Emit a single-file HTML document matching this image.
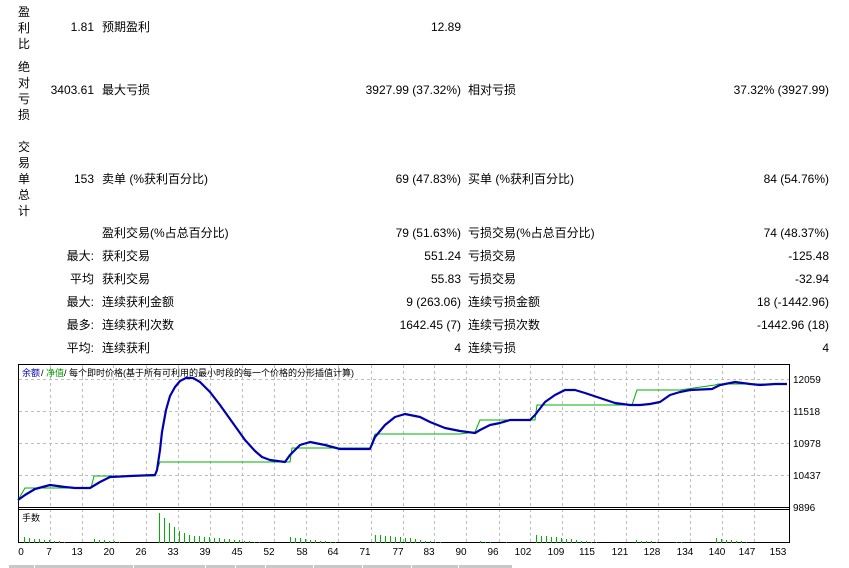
<!DOCTYPE html>
<html><head><meta charset="utf-8"><style>
html,body{margin:0;padding:0;background:#fff;width:849px;height:568px;overflow:hidden;position:relative;font-family:"Liberation Sans","Noto Sans CJK SC",sans-serif;font-size:12px;color:#000}
.t{position:absolute;line-height:16px;white-space:nowrap}
.r{text-align:right}
.v{position:absolute;left:17px;width:14px;line-height:16px;font-size:12px;text-align:center}
svg{position:absolute;left:0;top:0}
</style></head><body>
<div class="v" style="top:4px">盈<br>利<br>比</div>
<div class="v" style="top:59px">绝<br>对<br>亏<br>损</div>
<div class="v" style="top:139px">交<br>易<br>单<br>总<br>计</div>

<div class="t r" style="right:755px;top:19px">1.81</div>
<div class="t" style="left:102px;top:19px">预期盈利</div>
<div class="t r" style="right:388px;top:19px">12.89</div>

<div class="t r" style="right:755px;top:82px">3403.61</div>
<div class="t" style="left:102px;top:82px">最大亏损</div>
<div class="t r" style="right:388px;top:82px">3927.99 (37.32%)</div>
<div class="t" style="left:468px;top:82px">相对亏损</div>
<div class="t r" style="right:20px;top:82px">37.32% (3927.99)</div>

<div class="t r" style="right:755px;top:171px">153</div>
<div class="t" style="left:102px;top:171px">卖单 (%获利百分比)</div>
<div class="t r" style="right:388px;top:171px">69 (47.83%)</div>
<div class="t" style="left:468px;top:171px">买单 (%获利百分比)</div>
<div class="t r" style="right:20px;top:171px">84 (54.76%)</div>

<div class="t" style="left:102px;top:225px">盈利交易(%占总百分比)</div>
<div class="t r" style="right:388px;top:225px">79 (51.63%)</div>
<div class="t" style="left:468px;top:225px">亏损交易(%占总百分比)</div>
<div class="t r" style="right:20px;top:225px">74 (48.37%)</div>

<div class="t r" style="right:755px;top:248px">最大:</div>
<div class="t" style="left:102px;top:248px">获利交易</div>
<div class="t r" style="right:388px;top:248px">551.24</div>
<div class="t" style="left:468px;top:248px">亏损交易</div>
<div class="t r" style="right:20px;top:248px">-125.48</div>

<div class="t r" style="right:755px;top:271px">平均</div>
<div class="t" style="left:102px;top:271px">获利交易</div>
<div class="t r" style="right:388px;top:271px">55.83</div>
<div class="t" style="left:468px;top:271px">亏损交易</div>
<div class="t r" style="right:20px;top:271px">-32.94</div>

<div class="t r" style="right:755px;top:294px">最大:</div>
<div class="t" style="left:102px;top:294px">连续获利金额</div>
<div class="t r" style="right:388px;top:294px">9 (263.06)</div>
<div class="t" style="left:468px;top:294px">连续亏损金额</div>
<div class="t r" style="right:20px;top:294px">18 (-1442.96)</div>

<div class="t r" style="right:755px;top:317px">最多:</div>
<div class="t" style="left:102px;top:317px">连续获利次数</div>
<div class="t r" style="right:388px;top:317px">1642.45 (7)</div>
<div class="t" style="left:468px;top:317px">连续亏损次数</div>
<div class="t r" style="right:20px;top:317px">-1442.96 (18)</div>

<div class="t r" style="right:755px;top:340px">平均:</div>
<div class="t" style="left:102px;top:340px">连续获利</div>
<div class="t r" style="right:388px;top:340px">4</div>
<div class="t" style="left:468px;top:340px">连续亏损</div>
<div class="t r" style="right:20px;top:340px">4</div>

<svg width="849" height="568" viewBox="0 0 849 568">
<g stroke="#bdbdbd" stroke-dasharray="3,3" stroke-width="1" fill="none">
<path d="M50.5 365V543M82.5 365V543M113.5 365V543M146.5 365V543M178.5 365V543M210.5 365V543M242.5 365V543M274.5 365V543M306.5 365V543M338.5 365V543M371.5 365V543M403.5 365V543M434.5 365V543M466.5 365V543M499.5 365V543M530.5 365V543M562.5 365V543M594.5 365V543M626.5 365V543M658.5 365V543M690.5 365V543M722.5 365V543M754.5 365V543"/>
<path d="M19 379.5H789M19 411.5H789M19 443.5H789M19 475.5H789"/>
</g>
<rect x="18.5" y="364.5" width="771" height="178" fill="none" stroke="#000"/>
<path d="M18 507.5H790M18 509.5H790" stroke="#000"/>
<path d="M789.5 379v3M789.5 411v3M789.5 443v3M789.5 475v3M789.5 507v3" stroke="#000"/>
<path d="M18 500L25 488L90 488L91 488L94 476L155 476L157 470L160 462L290 462L292 448L370 448L375 434L460 434L475 432L480 420L535 420L537 405L632 405L637 390L680 390L715 385L718 384L787 384" fill="none" stroke="#00b000" stroke-width="1"/>
<path d="M18 500L25 495L35 489L50 485L65 487L75 488L90 488L100 482L110 477L130 476L155 475L157 470L160 450L162 432L166 410L170 396L175 387L180 381L186 378L193 378L200 382L210 392L220 405L230 419L245 440L255 451L262 457L270 460L285 462L290 455L300 445L310 442L325 445L340 449L370 449L375 437L385 425L395 417L405 414L420 417L430 422L445 428L460 431L475 433L480 430L490 425L500 423L510 420L530 420L535 415L545 402L555 395L565 390L575 390L585 393L600 398L615 403L630 405L640 405L650 404L660 402L670 395L680 392L690 390L712 389L720 385L735 382L750 384L760 385L775 384L787 384" fill="none" stroke="#0000b0" stroke-width="2.2" stroke-linejoin="round"/>
<g stroke="#00b000" stroke-width="1">
<path d="M24.5 543v-6M29.5 543v-5M34.5 543v-4M39.5 543v-4M44.5 543v-3M49.5 543v-3M54.5 543v-2M59.5 543v-2M64.5 543v-1M94.5 543v-4M99.5 543v-3M104.5 543v-3M109.5 543v-2M114.5 543v-2M119.5 543v-1M159.5 543v-30M164.5 543v-25M169.5 543v-20M174.5 543v-16M179.5 543v-12M184.5 543v-10M189.5 543v-8M194.5 543v-7M199.5 543v-7M204.5 543v-6M209.5 543v-6M214.5 543v-5M219.5 543v-5M224.5 543v-4M229.5 543v-4M234.5 543v-3M239.5 543v-3M244.5 543v-2M249.5 543v-2M254.5 543v-1M259.5 543v-1M290.5 543v-6M295.5 543v-5M300.5 543v-5M305.5 543v-4M310.5 543v-3M315.5 543v-3M320.5 543v-2M325.5 543v-2M330.5 543v-1M335.5 543v-1M375.5 543v-8M380.5 543v-8M385.5 543v-7M390.5 543v-7M395.5 543v-6M400.5 543v-6M405.5 543v-5M410.5 543v-5M415.5 543v-4M420.5 543v-3M425.5 543v-2M430.5 543v-2M435.5 543v-1M440.5 543v-1M480.5 543v-2M485.5 543v-1M490.5 543v-1M506.5 543v-1M536.5 543v-8M541.5 543v-7M546.5 543v-7M551.5 543v-6M556.5 543v-6M561.5 543v-5M566.5 543v-4M571.5 543v-4M576.5 543v-3M581.5 543v-2M586.5 543v-2M591.5 543v-1M596.5 543v-1M636.5 543v-3M641.5 543v-2M646.5 543v-2M651.5 543v-2M656.5 543v-1M676.5 543v-1M681.5 543v-1M716.5 543v-5M721.5 543v-4M726.5 543v-3M731.5 543v-3M736.5 543v-2M741.5 543v-2M746.5 543v-1"/>
</g>
<g font-family="Liberation Sans, Noto Sans CJK SC, sans-serif" font-size="9">
<text x="22" y="376" fill="#0000b0">余额</text><text x="41" y="376" fill="#000">/</text>
<text x="46" y="376" fill="#00a000">净值</text>
<text x="64" y="376" fill="#000">/ 每个即时价格(基于所有可利用的最小时段的每一个价格的分形插值计算)</text>
<text x="22" y="521" fill="#000">手数</text>
</g>
<g font-family="Liberation Sans, sans-serif" font-size="10" fill="#000">
<text x="793" y="383">12059</text><text x="793" y="415">11518</text><text x="793" y="447">10978</text><text x="793" y="479">10437</text><text x="793" y="511">9896</text>
</g>
<g font-family="Liberation Sans, sans-serif" font-size="10" fill="#000" text-anchor="middle">
<text x="21" y="555">0</text><text x="49" y="555">7</text><text x="77" y="555">13</text><text x="109" y="555">20</text><text x="141" y="555">26</text><text x="173" y="555">33</text><text x="205" y="555">39</text><text x="237" y="555">45</text><text x="269" y="555">52</text><text x="302" y="555">58</text><text x="333" y="555">64</text><text x="365" y="555">71</text><text x="398" y="555">77</text><text x="429" y="555">83</text><text x="461" y="555">90</text><text x="493" y="555">96</text><text x="523" y="555">102</text><text x="556" y="555">109</text><text x="587" y="555">115</text><text x="620" y="555">121</text><text x="652" y="555">128</text><text x="685" y="555">134</text><text x="717" y="555">140</text><text x="747" y="555">147</text><text x="778" y="555">153</text>
</g>
<rect x="9" y="565" width="503" height="3" fill="#c8c8c8"/>
<path d="M34.5 565v3M133.5 565v3M205.5 565v3M235.5 565v3M265.5 565v3M313.5 565v3M362.5 565v3M411.5 565v3M458.5 565v3" stroke="#fff"/>
</svg>
</body></html>
